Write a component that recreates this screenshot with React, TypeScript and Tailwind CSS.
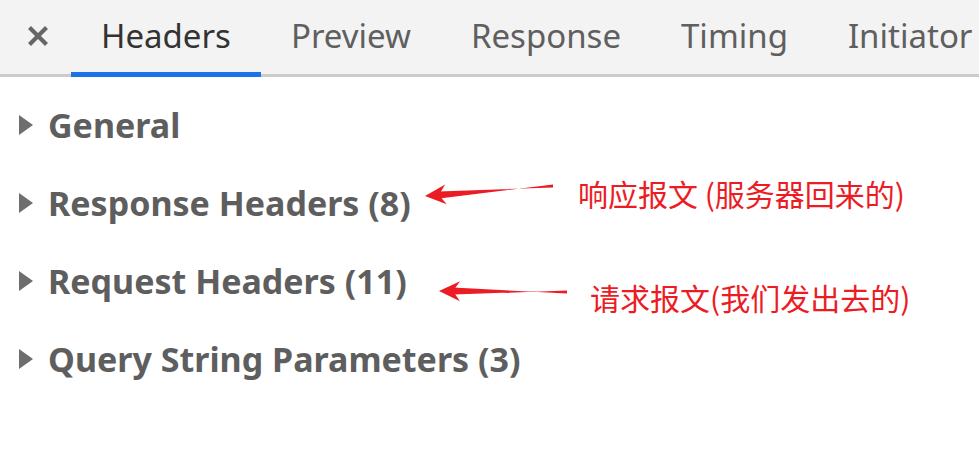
import React from "react";

const tabs = ["Headers", "Preview", "Response", "Timing", "Initiator"];
const sections = ["General", "Response Headers (8)", "Request Headers (11)", "Query String Parameters (3)"];

function Arrow({ x1, y1, x2, y2 }: { x1: number; y1: number; x2: number; y2: number }) {
  // x2,y2 is the tip
  const dx = x2 - x1;
  const dy = y2 - y1;
  const len = Math.hypot(dx, dy);
  const ux = dx / len;
  const uy = dy / len;
  const hx = x2 - ux * 21;
  const hy = y2 - uy * 21;
  const nx = -uy;
  const ny = ux;
  const bx = x2 - ux * 14;
  const by = y2 - uy * 14;
  return (
    <g fill="#ec1c24" stroke="none">
      <polygon
        points={`${x1},${y1 - 1.5} ${x1},${y1 + 1.5} ${bx + nx * 3.5},${by + ny * 3.5} ${bx - nx * 3.5},${by - ny * 3.5}`}
      />
      <polygon
        points={`${x2},${y2} ${hx + nx * 10},${hy + ny * 10} ${bx},${by} ${hx - nx * 10},${hy - ny * 10}`}
      />
    </g>
  );
}

export default function App() {
  return (
    <div className="relative w-[979px] h-[465px] bg-white overflow-hidden font-['Noto_Sans',sans-serif]">
      <div className="flex items-stretch h-[77px] bg-[#f3f3f3] border-b-[3px] border-[#cbcbcb]">
        <div className="flex items-center shrink-0 w-[71px] pl-[27px] pb-[3px]">
          <svg width="22" height="22" viewBox="0 0 22 22">
            <path d="M2.5 2.5 L19.5 19.5 M19.5 2.5 L2.5 19.5" stroke="#666" strokeWidth="4.2" strokeLinecap="butt" />
          </svg>
        </div>
        {tabs.map((t, i) => (
          <div
            key={t}
            className={
              "relative flex items-center shrink-0 px-[30px] text-[33px] pb-[3px] whitespace-nowrap " +
              (i === 0 ? "text-[#333]" : "text-[#5f5f5f]")
            }
          >
            {t}
            {i === 0 && <div className="absolute left-0 right-0 bottom-[-3px] h-[5px] bg-[#1a73e8]" />}
          </div>
        ))}
      </div>

      <div className="flex flex-col pt-[9px]">
        {sections.map((s) => (
          <div key={s} className="flex items-center h-[78px] pl-[19px] gap-[15px]">
            <svg width="14" height="20" viewBox="0 0 14 20">
              <polygon points="0,0 14,10 0,20" fill="#6e6e6e" />
            </svg>
            <span className="text-[34px] font-bold text-[#5e5e5e] whitespace-nowrap">{s}</span>
          </div>
        ))}
      </div>

      <svg className="absolute left-0 top-0" width="979" height="465">
        <Arrow x1={553} y1={186} x2={425} y2={196} />
        <Arrow x1={567} y1={292} x2={439} y2={291} />
      </svg>

      <div className="absolute left-[578px] top-[173px] text-[30px] leading-[40px] text-[#ec1c24] font-['Noto_Sans_CJK_SC',sans-serif] whitespace-nowrap">
        响应报文 (服务器回来的)
      </div>
      <div className="absolute left-[590px] top-[277px] text-[30px] leading-[40px] text-[#ec1c24] font-['Noto_Sans_CJK_SC',sans-serif] whitespace-nowrap">
        请求报文(我们发出去的)
      </div>
    </div>
  );
}
